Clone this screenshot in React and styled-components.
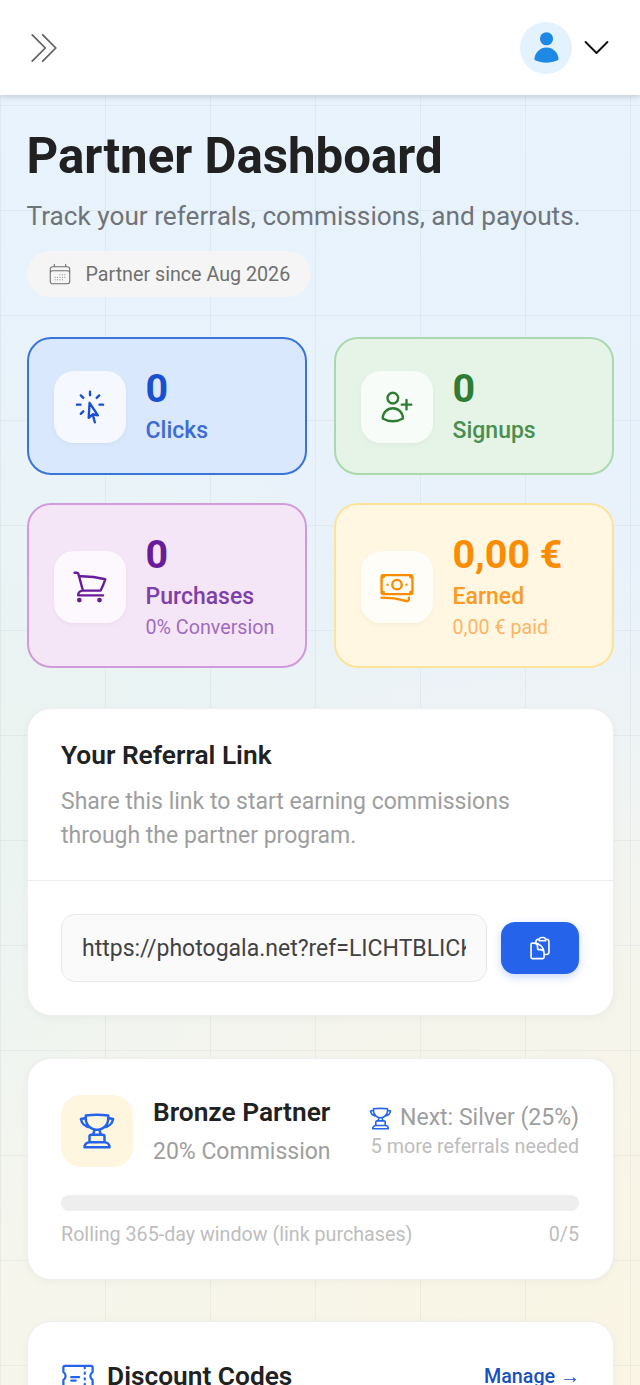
import React from 'react'
import styled, { createGlobalStyle } from 'styled-components'
import {
  HiOutlineBanknotes,
  HiOutlineCalendarDays,
  HiOutlineChevronDoubleRight,
  HiOutlineChevronDown,
  HiOutlineClipboardDocument,
  HiOutlineCursorArrowRays,
  HiOutlineShoppingCart,
  HiOutlineTicket,
  HiOutlineTrophy,
  HiOutlineUserPlus,
  HiUser,
} from 'react-icons/hi2'

const stats = [
  { tone: 'blue', Icon: HiOutlineCursorArrowRays, value: '0', label: 'Clicks' },
  { tone: 'green', Icon: HiOutlineUserPlus, value: '0', label: 'Signups' },
  { tone: 'purple', Icon: HiOutlineShoppingCart, value: '0', label: 'Purchases', note: '0% Conversion' },
  { tone: 'orange', Icon: HiOutlineBanknotes, value: '0,00 €', label: 'Earned', note: '0,00 € paid' },
]

const tones = {
  blue: { bg: '#d9e8fd', line: '#3a74d8', value: '#1a4fd0', label: '#3f6bd6', note: '#3f6bd6' },
  green: { bg: '#e6f4e8', line: '#abd8ae', value: '#2e7d32', label: '#4a8f4e', note: '#4a8f4e' },
  purple: { bg: '#f5e6f7', line: '#cf9bdb', value: '#6a1b9a', label: '#7f3fa8', note: '#a06cbd' },
  orange: { bg: '#fff7e2', line: '#fde39a', value: '#fb8c00', label: '#fb9a24', note: '#fcb564' },
}

const App = () => (
  <Page>
    <GlobalStyle />
    <Header>
      <MenuIcon />
      <Account>
        <Avatar>
          <HiUser />
        </Avatar>
        <CaretIcon />
      </Account>
    </Header>
    <Main>
      <Title>Partner Dashboard</Title>
      <Subtitle>Track your referrals, commissions, and payouts.</Subtitle>
      <SincePill>
        <HiOutlineCalendarDays />
        Partner since Aug 2026
      </SincePill>

      <StatGrid>
        {stats.map(({ tone, Icon, value, label, note }) => (
          <StatCard key={label} $tone={tone}>
            <StatIcon $tone={tone}>
              <Icon />
            </StatIcon>
            <div>
              <StatValue $tone={tone}>{value}</StatValue>
              <StatLabel $tone={tone}>{label}</StatLabel>
              {note && <StatNote $tone={tone}>{note}</StatNote>}
            </div>
          </StatCard>
        ))}
      </StatGrid>

      <LinkCard>
        <LinkIntro>
          <CardTitle>Your Referral Link</CardTitle>
          <CardText>Share this link to start earning commissions through the partner program.</CardText>
        </LinkIntro>
        <LinkRow>
          <LinkInput readOnly value="https://photogala.net?ref=LICHTBLICK" />
          <CopyButton aria-label="Copy">
            <HiOutlineClipboardDocument />
          </CopyButton>
        </LinkRow>
      </LinkCard>

      <TierCard>
        <TierTop>
          <TierBadge>
            <HiOutlineTrophy />
          </TierBadge>
          <div>
            <TierName>Bronze Partner</TierName>
            <TierRate>20% Commission</TierRate>
          </div>
          <TierNext>
            <NextLine>
              <HiOutlineTrophy />
              Next: Silver (25%)
            </NextLine>
            <NextNote>5 more referrals needed</NextNote>
          </TierNext>
        </TierTop>
        <ProgressTrack />
        <ProgressCaption>
          <span>Rolling 365-day window (link purchases)</span>
          <span>0/5</span>
        </ProgressCaption>
      </TierCard>

      <CodesCard>
        <CodesHead>
          <CodesTitle>
            <HiOutlineTicket />
            Discount Codes
          </CodesTitle>
          <ManageLink>
            Manage <Arrow>→</Arrow>
          </ManageLink>
        </CodesHead>
      </CodesCard>
    </Main>
  </Page>
)

export default App

const GlobalStyle = createGlobalStyle`
  html, body {
    margin: 0;
    height: 100%;
    overflow: hidden;
  }
  body {
    font-family: Roboto, "Liberation Sans", sans-serif;
    color: #212121;
  }
`

const Page = styled.div`
  height: 1385px;
  overflow: hidden;
  background-color: #edf4f6;
  background-image:
    linear-gradient(rgba(120, 140, 160, 0.09) 1px, transparent 1px),
    linear-gradient(90deg, rgba(120, 140, 160, 0.09) 1px, transparent 1px),
    radial-gradient(circle at 100% 100%, #faf5e4 0, rgba(250, 245, 228, 0) 55%),
    radial-gradient(circle at 0 55%, #ebf4f0 0, rgba(235, 244, 240, 0) 45%),
    linear-gradient(180deg, #e8f3fd 0, #e9f2fb 45%, #f6f6ee 100%);
  background-size: 105px 105px, 105px 105px, 100% 100%, 100% 100%, 100% 100%;
`

const Header = styled.header`
  height: 95px;
  box-sizing: border-box;
  padding: 0 26px 0 23px;
  display: flex;
  align-items: center;
  justify-content: space-between;
  background: #fff;
  box-shadow: 0 2px 6px rgba(0, 0, 0, 0.16);
`

const MenuIcon = styled(HiOutlineChevronDoubleRight)`
  width: 42px;
  height: 42px;
  color: #5f5f5f;
  stroke-width: 1;
`

const Account = styled.div`
  display: flex;
  align-items: center;
  gap: 7px;
`

const Avatar = styled.div`
  width: 52px;
  height: 52px;
  border-radius: 50%;
  background: #e3f2fd;
  color: #1e88e5;
  display: flex;
  align-items: center;
  justify-content: center;

  svg {
    width: 35px;
    height: 35px;
  }
`

const CaretIcon = styled(HiOutlineChevronDown)`
  width: 35px;
  height: 35px;
  color: #111;
  stroke-width: 1.3;
`

const Main = styled.main`
  padding: 29px 26.5px 0;
`

const Title = styled.h1`
  margin: 0;
  font-size: 49.2px;
  line-height: 64px;
  font-weight: 700;
  color: #212121;
`

const Subtitle = styled.p`
  margin: 11px 0 0;
  font-size: 26.2px;
  line-height: 34px;
  color: #6f7478;
`

const SincePill = styled.div`
  margin-top: 18px;
  width: fit-content;
  height: 46px;
  padding: 0 21px 0 20px;
  display: flex;
  align-items: center;
  gap: 13px;
  border-radius: 23px;
  background: #f5f5f5;
  font-size: 19.7px;
  color: #707070;

  svg {
    width: 26px;
    height: 26px;
    stroke-width: 1;
  }
`

const StatGrid = styled.div`
  margin-top: 40px;
  display: grid;
  grid-template-columns: 280px 280px;
  gap: 28px 27px;
`

const StatCard = styled.div`
  box-sizing: border-box;
  padding: 27px 26px 25px;
  display: flex;
  align-items: center;
  gap: 20px;
  border: 2px solid ${({ $tone }) => tones[$tone].line};
  border-radius: 24px;
  background: ${({ $tone }) => tones[$tone].bg};
`

const StatIcon = styled.div`
  flex: none;
  width: 72px;
  height: 72px;
  margin-left: -1px;
  border-radius: 20px;
  background: rgba(255, 255, 255, 0.72);
  box-shadow: 0 2px 5px rgba(0, 0, 0, 0.04);
  color: ${({ $tone }) => tones[$tone].value};
  display: flex;
  align-items: center;
  justify-content: center;

  svg {
    width: 38px;
    height: 38px;
  }
`

const StatValue = styled.div`
  font-size: 39.4px;
  line-height: 46px;
  font-weight: 700;
  color: ${({ $tone }) => tones[$tone].value};
`

const StatLabel = styled.div`
  margin-top: 2px;
  font-size: 23px;
  line-height: 34px;
  font-weight: 500;
  color: ${({ $tone }) => tones[$tone].label};
`

const StatNote = styled.div`
  font-size: 19.7px;
  line-height: 27px;
  color: ${({ $tone }) => tones[$tone].note};
`

const WhiteCard = styled.section`
  box-sizing: border-box;
  background: #fff;
  border: 1px solid #eeeeee;
  border-radius: 24px;
  box-shadow: 0 2px 8px rgba(0, 0, 0, 0.04);
`

const LinkCard = styled(WhiteCard)`
  margin-top: 40px;
  height: 308px;
`

const LinkIntro = styled.div`
  padding: 29px 33.5px 27px;
  border-bottom: 1px solid #eeeeee;
`

const CardTitle = styled.h2`
  margin: 0;
  font-size: 26.3px;
  line-height: 34px;
  font-weight: 600;
  color: #212121;
`

const CardText = styled.p`
  margin: 13px 0 0;
  font-size: 23px;
  line-height: 34px;
  color: #9e9e9e;
`

const LinkRow = styled.div`
  padding: 33px 33.5px;
  display: flex;
  align-items: center;
  gap: 14px;
`

const LinkInput = styled.input`
  flex: 1;
  min-width: 0;
  box-sizing: border-box;
  height: 68px;
  padding: 0 20px;
  border: 1px solid #e8e8e8;
  border-radius: 14px;
  background: #fafafa;
  font-family: inherit;
  font-size: 23px;
  color: #424242;
  outline: none;
`

const CopyButton = styled.button`
  flex: none;
  width: 78px;
  height: 52px;
  border: 0;
  border-radius: 14px;
  background: #2563eb;
  box-shadow: 0 3px 8px rgba(37, 99, 235, 0.25);
  color: #fff;
  display: flex;
  align-items: center;
  justify-content: center;

  svg {
    width: 26px;
    height: 26px;
  }
`

const TierCard = styled(WhiteCard)`
  margin-top: 42px;
  height: 222px;
  padding: 36px 33.5px 0;
`

const TierTop = styled.div`
  display: flex;
  align-items: flex-start;
  gap: 20px;
`

const TierBadge = styled.div`
  flex: none;
  width: 72px;
  height: 72px;
  border-radius: 20px;
  background: #fff6e0;
  color: #2563eb;
  display: flex;
  align-items: center;
  justify-content: center;

  svg {
    width: 40px;
    height: 40px;
  }
`

const TierName = styled.div`
  font-size: 26.3px;
  line-height: 34px;
  font-weight: 600;
  color: #212121;
`

const TierRate = styled.div`
  margin-top: 6px;
  font-size: 23px;
  line-height: 34px;
  color: #9e9e9e;
`

const TierNext = styled.div`
  margin-left: auto;
  padding-top: 8px;
  text-align: right;
`

const NextLine = styled.div`
  display: flex;
  align-items: center;
  justify-content: flex-end;
  gap: 7px;
  font-size: 23px;
  line-height: 30px;
  color: #9e9e9e;

  svg {
    width: 25px;
    height: 25px;
    color: #2563eb;
  }
`

const NextNote = styled.div`
  font-size: 19.7px;
  line-height: 28px;
  color: #bdbdbd;
`

const ProgressTrack = styled.div`
  margin-top: 26px;
  height: 16px;
  border-radius: 8px;
  background: #eeeeee;
`

const ProgressCaption = styled.div`
  margin-top: 10px;
  display: flex;
  justify-content: space-between;
  font-size: 19.7px;
  line-height: 28px;
  color: #bdbdbd;
`

const CodesCard = styled(WhiteCard)`
  margin-top: 41px;
  height: 300px;
  padding: 36px 33.5px 0;
`

const CodesHead = styled.div`
  display: flex;
  align-items: center;
  justify-content: space-between;
`

const CodesTitle = styled.h2`
  margin: 0;
  display: flex;
  align-items: center;
  gap: 11.5px;
  font-size: 26.3px;
  line-height: 34px;
  font-weight: 600;
  color: #212121;

  svg {
    width: 36px;
    height: 36px;
    margin-left: -1.5px;
    color: #2563eb;
  }
`

const ManageLink = styled.span`
  margin-right: -1px;
  font-size: 19.7px;
  font-weight: 500;
  color: #1a4fc0;
`

const Arrow = styled.span`
  font-family: "Liberation Sans", sans-serif;
  font-size: 20px;
  font-weight: 400;
`
